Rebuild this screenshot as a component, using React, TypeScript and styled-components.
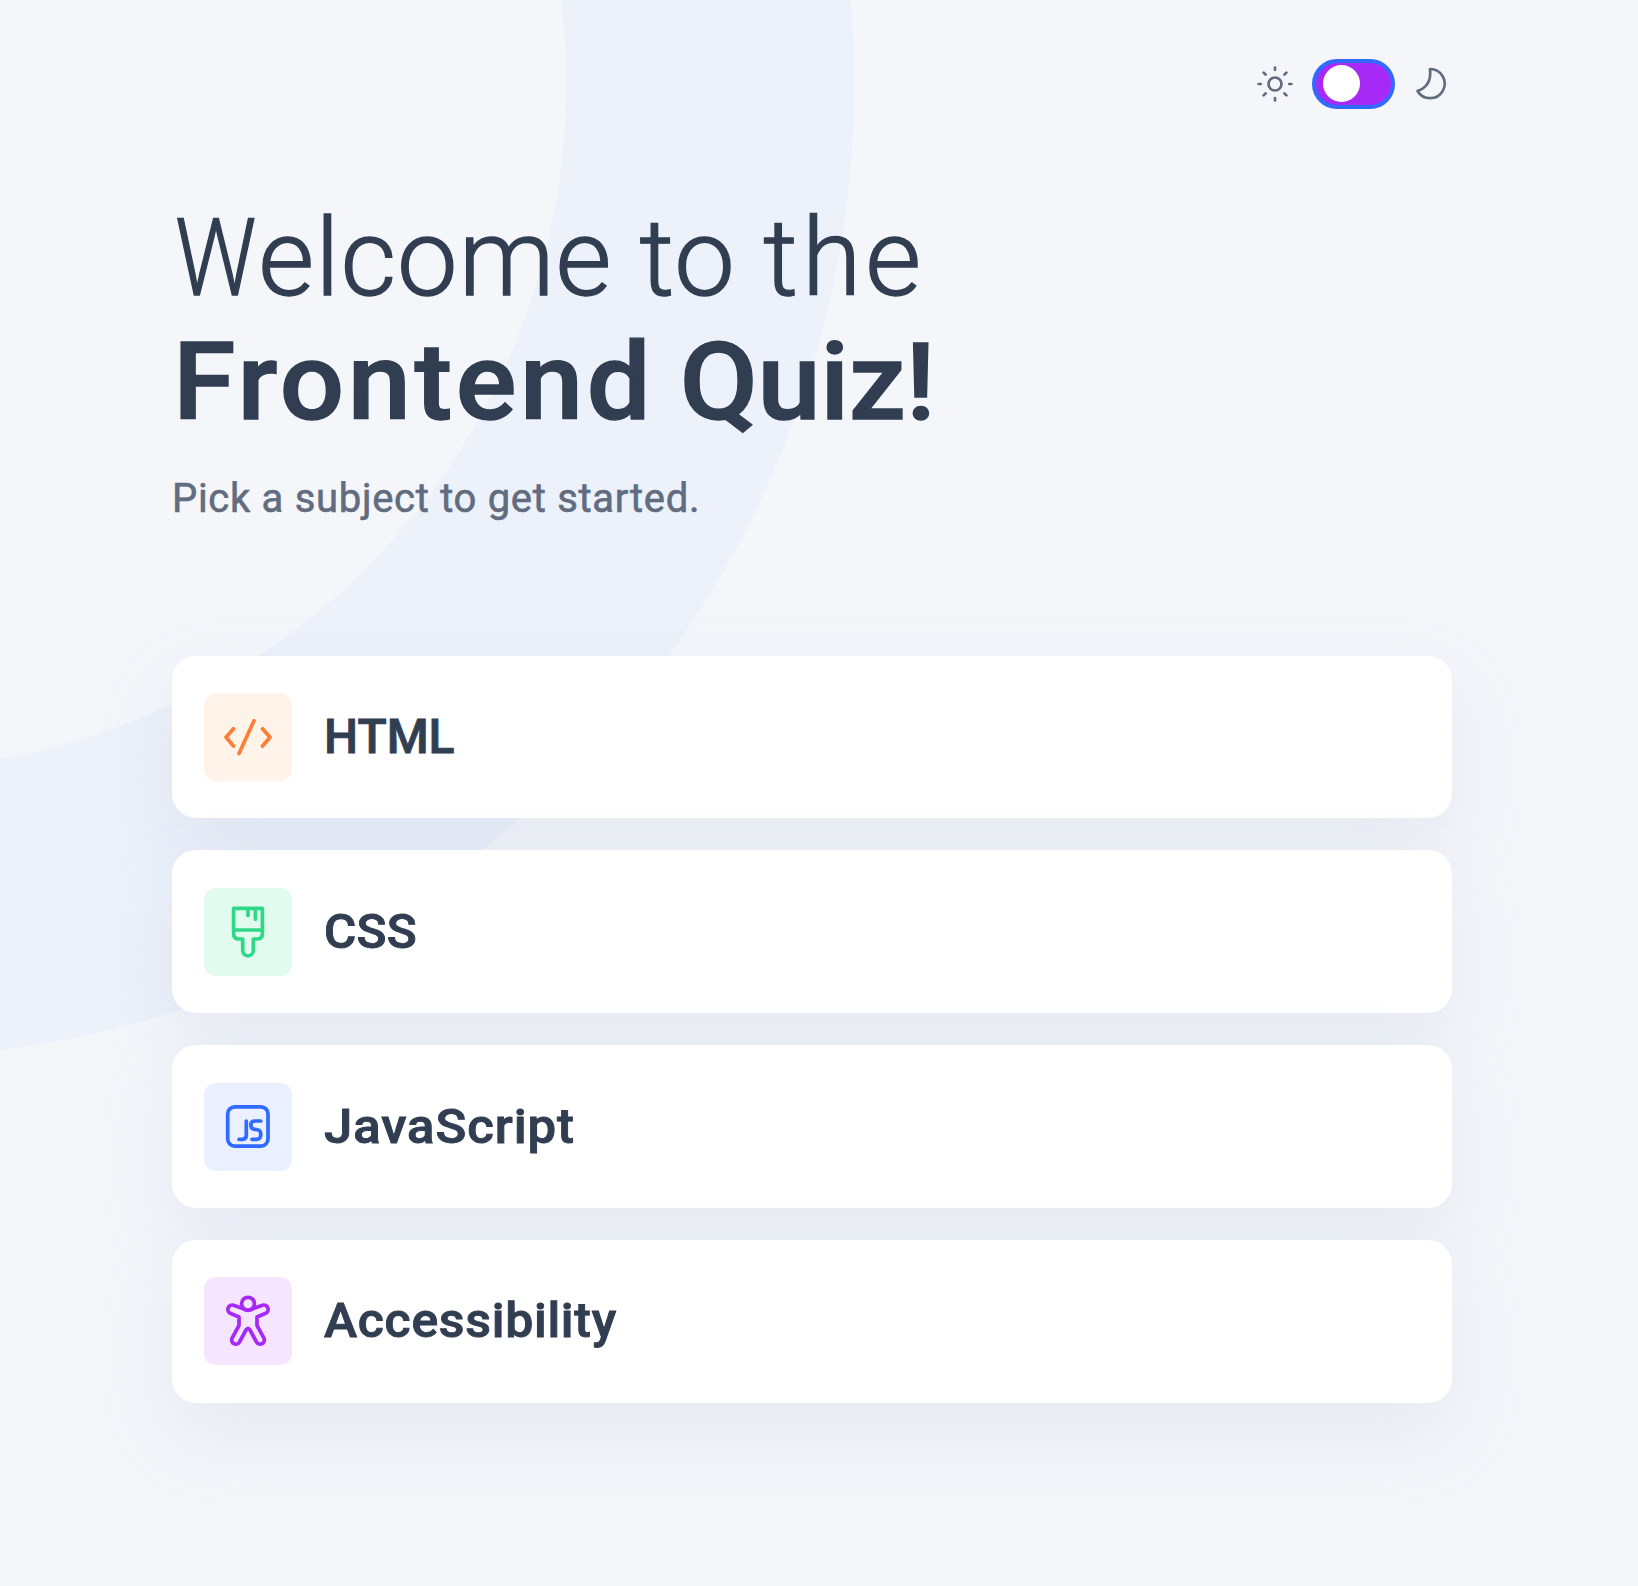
import React from "react";
import styled, { createGlobalStyle } from "styled-components";

const Global = createGlobalStyle`
  *, *::before, *::after { box-sizing: border-box; }
  html { height: 100%; }
  body {
    margin: 0;
    background: #f4f6fa;
    color: #313e51;
    font-family: Roboto, "Noto Sans", sans-serif;
  }
`;

const Page = styled.div`
  position: relative;
  height: 1586px;
  padding: 59px 186px 0 172px;
  overflow: hidden;
`;

const Backdrop = styled.svg`
  position: absolute;
  inset: 0;
  z-index: -1;
`;

const Header = styled.header`
  display: flex;
  justify-content: flex-end;
  align-items: center;
  gap: 13px;
  height: 50px;
`;

const ThemeIcon = styled.svg<{ $gapAfter?: number }>`
  width: 44px;
  height: 44px;
  display: block;
  margin-right: ${(p) => p.$gapAfter ?? 0}px;
  fill: none;
  stroke: #626c7f;
  stroke-width: 2.7;
  stroke-linecap: round;
  stroke-linejoin: round;
`;

const Switch = styled.button`
  display: flex;
  align-items: center;
  width: 83px;
  height: 50px;
  padding: 0 0 1px 7px;
  border: 4px solid #306aff;
  border-radius: 25px;
  background: #a729f5;
`;

const Knob = styled.span`
  width: 37px;
  height: 37px;
  border-radius: 50%;
  background: #fff;
`;

const Intro = styled.section`
  padding-top: 87px;
  height: 546.75px;
`;

const Title = styled.h1`
  margin: 0;
  font-size: 108px;
  line-height: 124px;
`;

const TitleLine = styled.span<{ $weight: number; $indent: number; $stretch: number; $wordGap: number }>`
  display: block;
  width: max-content;
  margin-left: ${(p) => p.$indent}px;
  font-weight: ${(p) => p.$weight};
  word-spacing: ${(p) => p.$wordGap}px;
  transform: scaleX(${(p) => p.$stretch});
  transform-origin: left;
  -webkit-text-stroke: 1.4px currentColor;
`;

const Word = styled.span<{ $tracking: number }>`
  letter-spacing: ${(p) => p.$tracking}px;
`;

const NarrowCap = styled.span`
  display: inline-block;
  margin-right: -14.5px;
  transform: scaleX(0.84);
  transform-origin: left;
`;

const Hint = styled.p`
  margin: 25px 0 0;
  width: max-content;
  font-size: 40px;
  line-height: 60px;
  letter-spacing: 0.7px;
  color: #626c7f;
  -webkit-text-stroke: 0.6px currentColor;
`;

const List = styled.ul`
  display: flex;
  flex-direction: column;
  gap: 32px;
  margin: 0;
  padding: 0;
  list-style: none;
`;

const Card = styled.li`
  display: flex;
  align-items: center;
  gap: 32px;
  height: 162.72px;
  padding: 0 32px;
  border-radius: 24px;
  background: #fff;
  box-shadow: 0 32px 80px rgba(143, 160, 193, 0.14);
`;

const Tile = styled.span<{ $bg: string }>`
  display: flex;
  width: 88px;
  height: 88px;
  border-radius: 12px;
  background: ${(p) => p.$bg};
`;

const Glyph = styled.svg<{ $color: string }>`
  width: 88px;
  height: 88px;
  fill: none;
  stroke: ${(p) => p.$color};
  stroke-width: 3.7;
  stroke-linecap: round;
  stroke-linejoin: round;
`;

const Subject = styled.span<{ $tracking: number; $stretch: number }>`
  font-size: 48px;
  font-weight: 500;
  line-height: 60px;
  letter-spacing: ${(p) => p.$tracking}px;
  transform: scaleX(${(p) => p.$stretch});
  transform-origin: left;
  -webkit-text-stroke: 0.9px currentColor;
`;

const subjects = [
  {
    name: "HTML", color: "#ff7e35", bg: "#fff3ea", tracking: 0, stretch: 1,
    art: <path d="M29.5 35.8 L22 44.3 L29.5 53 M50 27.8 L35 60.5 M58.5 35.8 L66 44.3 L58.5 53" />,
  },
  {
    name: "CSS", color: "#2fd887", bg: "#e1fcef", tracking: 0.3, stretch: 1.03,
    art: <path d="M29.6 20.4 H58.4 V45.5 Q58.4 51 53 51 H49.3 V62.5 A5.3 5.3 0 0 1 38.7 62.5 V51 H35 Q29.6 51 29.6 45.5 Z M29.6 42 H58.4 M44 21 V27.5 M51.4 21 V31.2" />,
  },
  {
    name: "JavaScript", color: "#306aff", bg: "#eaf0ff", tracking: 0.9, stretch: 1.06,
    art: <><rect x="23.7" y="23.8" width="40.3" height="39.3" rx="7" /><path d="M42.3 38 V52 Q42.3 56.3 38.5 56.3 H35 M56.8 38 H51 Q46.8 38 46.8 42 Q46.8 45.8 50.5 46.3 L53.5 46.8 Q56.8 47.3 56.8 51.5 Q56.8 56.3 52.5 56.3 H48" /></>,
  },
  {
    name: "Accessibility", color: "#a729f5", bg: "#f5e5ff", tracking: 0.7, stretch: 1.04,
    art: <><circle cx="44" cy="26.7" r="6.4" /><path d="M38 31.3 L29.5 28.2 A4.4 4.4 0 0 0 26.2 36.3 L35 40 V48.5 L28.2 60.8 A4.2 4.2 0 0 0 35.5 65 L42 53 Q44 49.5 46 53 L52.5 65 A4.2 4.2 0 0 0 59.8 60.8 L53 48.5 V40 L61.8 36.3 A4.4 4.4 0 0 0 58.5 28.2 L50 31.3 Q44 35.3 38 31.3 Z" /></>,
  },
];

export default function App() {
  return (
    <Page>
      <Global />
      <Backdrop width="1638" height="1586">
        <circle cx="-119.5" cy="84" r="829.5" fill="none" stroke="#ecf1fa" strokeWidth="288" />
      </Backdrop>
      <Header>
        <ThemeIcon viewBox="0 0 44 44" $gapAfter={1.6}>
          <circle cx="22" cy="22" r="6.5" />
          <path d="M22 5.6v2.2M22 36.2v2.2M5.6 22h2.2M36.2 22h2.2M10.6 10.6l2 2M31.4 31.4l2 2M33.4 10.6l-2 2M12.6 31.4l-2 2" />
        </ThemeIcon>
        <Switch type="button" aria-label="Dark mode"><Knob /></Switch>
        <ThemeIcon viewBox="0 0 44 44">
          <path d="M22 7A14.6 14.6 0 1 1 9.5 29Q24 24 22 7Z" />
        </ThemeIcon>
      </Header>
      <Intro>
        <Title>
          <TitleLine $weight={300} $indent={3} $stretch={1} $wordGap={0}>
            <Word $tracking={1}><NarrowCap>W</NarrowCap>elcome to </Word>
            <Word $tracking={4}>the</Word>
          </TitleLine>
          <TitleLine $weight={500} $indent={1} $stretch={1.05} $wordGap={-6}>
            <Word $tracking={3.4}>Frontend </Word>
            <Word $tracking={-0.3}>Quiz!</Word>
          </TitleLine>
        </Title>
        <Hint>Pick a subject to get started.</Hint>
      </Intro>
      <List>
        {subjects.map((s) => (
          <Card key={s.name}>
            <Tile $bg={s.bg}><Glyph viewBox="0 0 88 88" $color={s.color}>{s.art}</Glyph></Tile>
            <Subject $tracking={s.tracking} $stretch={s.stretch}>{s.name}</Subject>
          </Card>
        ))}
      </List>
    </Page>
  );
}
